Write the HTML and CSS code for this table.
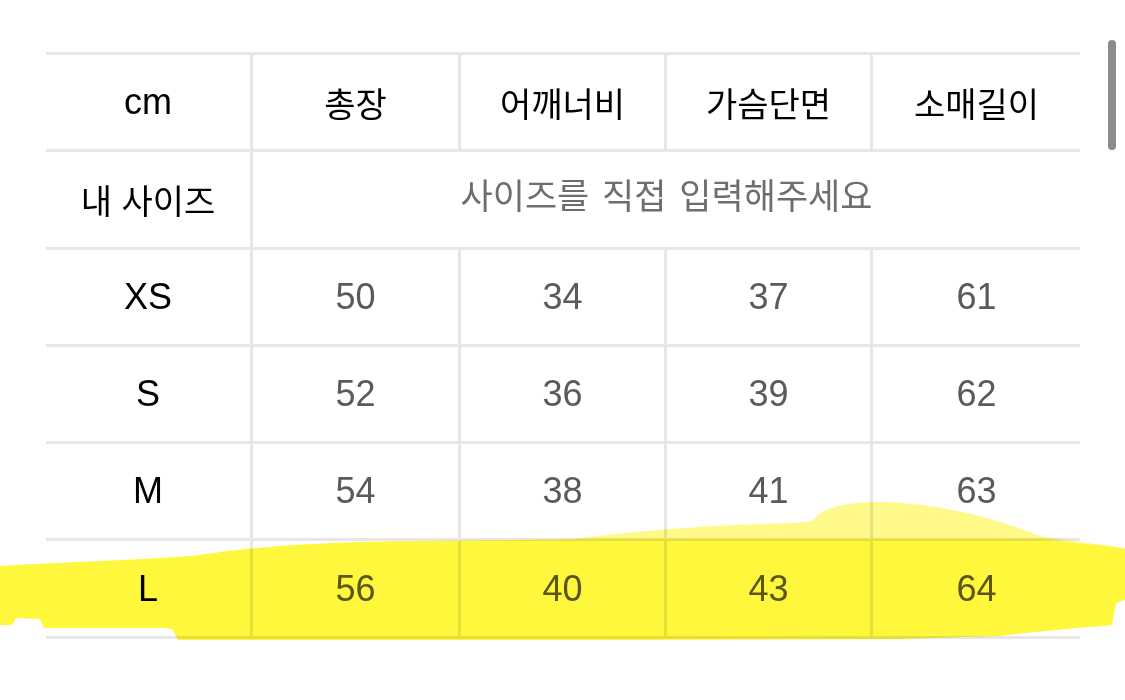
FILE: index.html
```html
<!DOCTYPE html>
<html lang="ko">
<head>
<meta charset="utf-8">
<title>사이즈</title>
<link rel="stylesheet" href="styles.css">
</head>
<body>
<div class="page">
  <div class="size-table">
    <div class="cell head latin">cm</div>
    <div class="cell head ko">총장</div>
    <div class="cell head ko">어깨너비</div>
    <div class="cell head ko">가슴단면</div>
    <div class="cell head ko last">소매길이</div>

    <div class="cell head ko">내 사이즈</div>
    <div class="cell placeholder span4 last">사이즈를 직접 입력해주세요</div>

    <div class="cell head latin">XS</div>
    <div class="cell val">50</div>
    <div class="cell val">34</div>
    <div class="cell val">37</div>
    <div class="cell val last">61</div>

    <div class="cell head latin">S</div>
    <div class="cell val">52</div>
    <div class="cell val">36</div>
    <div class="cell val">39</div>
    <div class="cell val last">62</div>

    <div class="cell head latin">M</div>
    <div class="cell val">54</div>
    <div class="cell val">38</div>
    <div class="cell val">41</div>
    <div class="cell val last">63</div>

    <div class="cell head latin">L</div>
    <div class="cell val">56</div>
    <div class="cell val">40</div>
    <div class="cell val">43</div>
    <div class="cell val last">64</div>
  </div>

  <div class="scrollbar"></div>

  <svg class="highlight" width="1125" height="700" viewBox="0 0 1125 700" aria-hidden="true">
    <path class="hl-light" d="M560,541 C620,532 700,526 760,524 C790,523 805,523 812,521 C822,508 845,501 885,502 C945,504 1000,520 1040,536 C1080,543 1110,545 1125,548 L1125,560 L560,560 Z"/>
    <path class="hl-main" d="M0,566 C60,562 150,560 200,555 C260,546 320,542 420,541 C480,540 540,540 600,539 L1040,539 C1080,544 1110,546 1125,549 L1125,600 L1116,603 L1112,625 C1080,628 1050,630 1000,636 L900,639 L600,640 L178,640 L172,629 L165,628 L44,628 L40,619 L16,618 L12,625 L0,625 Z"/>
  </svg>
</div>
</body>
</html>
```

FILE: styles.css
```css
html, body {
  margin: 0;
  padding: 0;
  background: #ffffff;
}

.page {
  position: relative;
  width: 1125px;
  height: 700px;
  overflow: hidden;
  padding: 52px 0 0 46px;
  box-sizing: border-box;
}

.size-table {
  display: grid;
  grid-template-columns: 207px 208px 206px 206px 207px;
  grid-auto-rows: 97.3px;
  width: 1034px;
  border-top: 3px solid #e7e7e7;
  font-family: "Liberation Sans", "Noto Sans CJK KR", sans-serif;
}

.cell {
  display: flex;
  align-items: center;
  justify-content: center;
  box-sizing: border-box;
  border-bottom: 3px solid #e7e7e7;
  border-right: 3px solid #e7e7e7;
  white-space: nowrap;
}

.cell.last {
  border-right: none;
}

.span4 {
  grid-column: span 4;
}

.head {
  color: #000000;
}

.latin {
  font-size: 36px;
  font-weight: 400;
}

.ko {
  font-family: "Noto Sans CJK KR", sans-serif;
  font-size: 34px;
  font-weight: 400;
}

.val {
  color: #5a5a5a;
  font-size: 36px;
}

.placeholder {
  font-family: "Noto Sans CJK KR", sans-serif;
  color: #6e6e6e;
  font-size: 35px;
  font-weight: 400;
  word-spacing: 3px;
  padding-bottom: 11px;
}

.scrollbar {
  position: absolute;
  left: 1108px;
  top: 40px;
  width: 8px;
  height: 110px;
  border-radius: 4px;
  background: #8b8b8b;
}

.highlight {
  position: absolute;
  left: 0;
  top: 0;
  pointer-events: none;
  mix-blend-mode: multiply;
}

.hl-main {
  fill: #fff73b;
}

.hl-light {
  fill: #fff98a;
}
```
